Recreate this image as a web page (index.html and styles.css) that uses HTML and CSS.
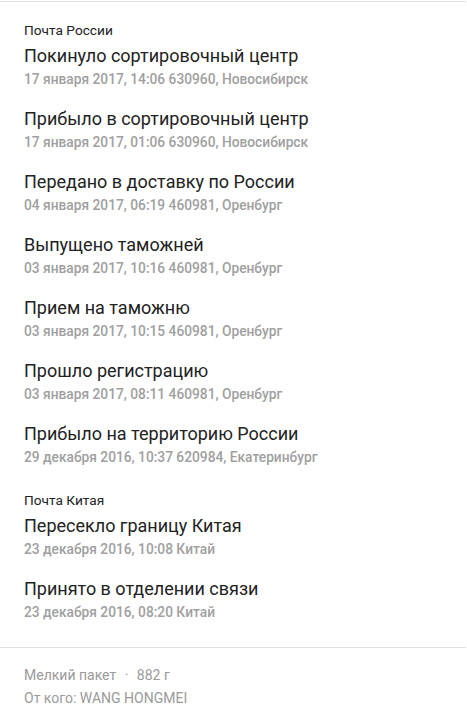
FILE: index.html
```html
<!DOCTYPE html>
<html lang="ru">
<head>
<meta charset="utf-8">
<link rel="stylesheet" href="styles.css">
</head>
<body>
<div class="card">
  <div class="events">
    <section class="group">
      <div class="group-label">Почта России</div>
      <div class="event"><div class="title">Покинуло сортировочный центр</div><div class="meta">17 января 2017, 14:06 630960, Новосибирск</div></div>
      <div class="event"><div class="title">Прибыло в сортировочный центр</div><div class="meta">17 января 2017, 01:06 630960, Новосибирск</div></div>
      <div class="event"><div class="title">Передано в доставку по России</div><div class="meta">04 января 2017, 06:19 460981, Оренбург</div></div>
      <div class="event"><div class="title">Выпущено таможней</div><div class="meta">03 января 2017, 10:16 460981, Оренбург</div></div>
      <div class="event"><div class="title">Прием на таможню</div><div class="meta">03 января 2017, 10:15 460981, Оренбург</div></div>
      <div class="event"><div class="title">Прошло регистрацию</div><div class="meta">03 января 2017, 08:11 460981, Оренбург</div></div>
      <div class="event"><div class="title">Прибыло на территорию России</div><div class="meta">29 декабря 2016, 10:37 620984, Екатеринбург</div></div>
    </section>
    <section class="group">
      <div class="group-label">Почта Китая</div>
      <div class="event"><div class="title">Пересекло границу Китая</div><div class="meta">23 декабря 2016, 10:08 Китай</div></div>
      <div class="event"><div class="title">Принято в отделении связи</div><div class="meta">23 декабря 2016, 08:20 Китай</div></div>
    </section>
  </div>
  <footer class="info">
    <div class="info-line">Мелкий пакет <span class="dot">·</span> 882 г</div>
    <div class="info-line">От кого: WANG HONGMEI</div>
  </footer>
</div>
</body>
</html>
```
FILE: styles.css
```css
html, body {
  margin: 0;
  padding: 0;
  background: #ffffff;
}
body {
  font-family: Roboto, "Noto Sans", sans-serif;
  color: #222222;
}
.card {
  width: 466px;
  border-top: 1px solid #e2e2e2;
  margin-top: 1px;
}
.events {
  padding: 19px 24px 0;
  display: flex;
  flex-direction: column;
  gap: 24px;
}
.group {
  display: flex;
  flex-direction: column;
}
.group-label {
  font-size: 13.7px;
  line-height: 18px;
  margin-bottom: 6px;
}
.event {
  display: flex;
  flex-direction: column;
  margin-bottom: 19px;
}
.group .event:last-child {
  margin-bottom: 0;
}
.title {
  font-size: 18px;
  line-height: 22px;
}
.meta {
  font-size: 13.75px;
  line-height: 20px;
  font-weight: 500;
  color: #a0a0a0;
  margin-top: 2px;
}
.info {
  margin-top: 25px;
  border-top: 1px solid #e2e2e2;
  padding: 20px 24px 0;
  display: flex;
  flex-direction: column;
  gap: 9px;
}
.info-line {
  font-size: 14px;
  line-height: 14px;
  color: #9a9a9a;
}
.dot {
  margin: 0 5px;
}
```
